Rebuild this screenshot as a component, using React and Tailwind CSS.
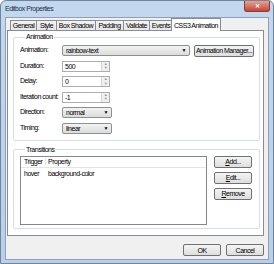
import { useState } from 'react';

const Spin = ({ value }) => (
    <div className="flex h-[11px] w-[48px] border border-[#abadb3] bg-white">
        <span className="flex-1 pl-[2px] leading-[9px]">{value}</span>
        <div className="flex w-[8px] flex-col border-l border-[#d6d6d6] bg-[#f0f0f0]">
            <span className="flex flex-1 items-center justify-center text-[4px] leading-none text-[#9a9a9a]">▲</span>
            <span className="flex flex-1 items-center justify-center text-[4px] leading-none text-[#9a9a9a]">▼</span>
        </div>
    </div>
);

const Combo = ({ value, width }) => (
    <div className={`flex h-[11px] items-center rounded-[2px] border border-[#8e8f8f] bg-gradient-to-b from-[#f3f3f3] to-[#dcdcdc] pl-[3px] pr-[3px] ${width}`}>
        <span className="flex-1 leading-[9px]">{value}</span>
        <span className="text-[5px] leading-none">▼</span>
    </div>
);

const Btn = ({ children, className = '' }) => (
    <button
        type="button"
        className={`flex h-[12px] items-center justify-center overflow-hidden rounded-[2px] border border-[#707070] bg-gradient-to-b from-[#f4f4f4] to-[#dedede] leading-none whitespace-nowrap ${className}`}
    >
        {children}
    </button>
);

const Row = ({ label, children }) => (
    <div className="flex h-[11px] items-center">
        <span className="w-[42px]">{label}</span>
        {children}
    </div>
);

const tabs = [
    ['General', 'w-[26px]'],
    ['Style', 'w-[20px]'],
    ['Box Shadow', 'w-[39px]'],
    ['Padding', 'w-[28px]'],
    ['Validate', 'w-[26px]'],
    ['Events', 'w-[23px]'],
];

export default function App() {
    const [tab] = useState('CSS3 Animation');

    return (
        <div className="flex h-[264px] w-[274px] flex-col whitespace-nowrap rounded-t-[6px] border border-[#6d849c] bg-gradient-to-b from-[#c3d8ef] to-[#b9cfe7] font-['Liberation_Sans',sans-serif] text-[7px] tracking-[-0.5px] text-black">
            <div className="flex h-[16px] items-start justify-between pl-[4px] pr-[3px]">
                <span className="mt-[4px] leading-[8px] text-[#1b2f47]">Editbox Properties</span>
                <div className="flex h-[11px] w-[26px] items-center justify-center rounded-b-[3px] border border-t-0 border-[#8b3a3a] bg-gradient-to-b from-[#e8a293] to-[#c2443a] text-[6px] font-bold leading-none text-white">
                    ✕
                </div>
            </div>

            <div className="mx-[4px] mb-[3px] flex flex-1 flex-col border border-[#8da2ba] bg-[#f0f0f0] pl-[1px] pr-[4px]">
                <div className="flex h-[12px] items-end pl-[3px]">
                    {tabs.map(([name, w]) => (
                        <div
                            key={name}
                            className={`flex h-[10px] items-center justify-center overflow-hidden border border-b-0 border-r-0 border-[#898c95] bg-gradient-to-b from-[#f3f3f3] to-[#e6e6e6] leading-none ${w}`}
                        >
                            {name}
                        </div>
                    ))}
                    <div className="relative z-10 -mb-[1px] -ml-[1px] flex h-[13px] w-[50px] items-center justify-center border border-b-0 border-[#898c95] bg-white leading-none">
                        {tab}
                    </div>
                </div>

                <div className="flex h-[206px] flex-col border border-[#898c95] bg-white pl-[5px] pr-[3px]">
                    <fieldset className="mt-[2px] rounded-[2px] border border-[#d5dfe5] pb-[6px] pl-[6px]">
                        <legend className="ml-[5px] px-[1px] leading-[8px]">Animation</legend>
                        <div className="flex flex-col gap-[4.5px] pt-[4px]">
                            <Row label="Animation:">
                                <Combo value="rainbow-text" width="w-[128px]" />
                                <Btn className="ml-[4px] w-[60px]">Animation Manager...</Btn>
                            </Row>
                            <Row label="Duration:"><Spin value="500" /></Row>
                            <Row label="Delay:"><Spin value="0" /></Row>
                            <Row label="Iteration count:"><Spin value="-1" /></Row>
                            <Row label="Direction:"><Combo value="normal" width="w-[50px]" /></Row>
                            <Row label="Timing:"><Combo value="linear" width="w-[50px]" /></Row>
                        </div>
                    </fieldset>

                    <fieldset className="mt-[5px] rounded-[2px] border border-[#d5dfe5] pb-[3px] pl-[6px]">
                        <legend className="ml-[5px] px-[1px] leading-[8px]">Transitions</legend>
                        <div className="flex pt-[2px]">
                            <div className="h-[69px] w-[187px] border border-[#828790] bg-white">
                                <div className="flex h-[11px] items-center border-b border-[#e5e5e5] leading-none">
                                    <span className="w-[25px] border-r border-[#e5e5e5] pl-[3px]">Trigger</span>
                                    <span className="pl-[2px]">Property</span>
                                </div>
                                <div className="flex h-[11px] items-center leading-none">
                                    <span className="w-[25px] pl-[3px]">hover</span>
                                    <span className="pl-[2px]">background-color</span>
                                </div>
                            </div>
                            <div className="ml-[7px] flex flex-col gap-[4px]">
                                <Btn className="w-[38px]"><span><u>A</u>dd...</span></Btn>
                                <Btn className="w-[38px]"><span><u>E</u>dit...</span></Btn>
                                <Btn className="w-[38px]"><span><u>R</u>emove</span></Btn>
                            </div>
                        </div>
                    </fieldset>
                </div>

                <div className="mt-[8px] flex justify-end gap-[5px]">
                    <Btn className="w-[38px] border-[#3c7fb1] from-[#eaf6fd] to-[#d2e8f7]">OK</Btn>
                    <Btn className="w-[38px]">Cancel</Btn>
                </div>
            </div>
        </div>
    );
}
